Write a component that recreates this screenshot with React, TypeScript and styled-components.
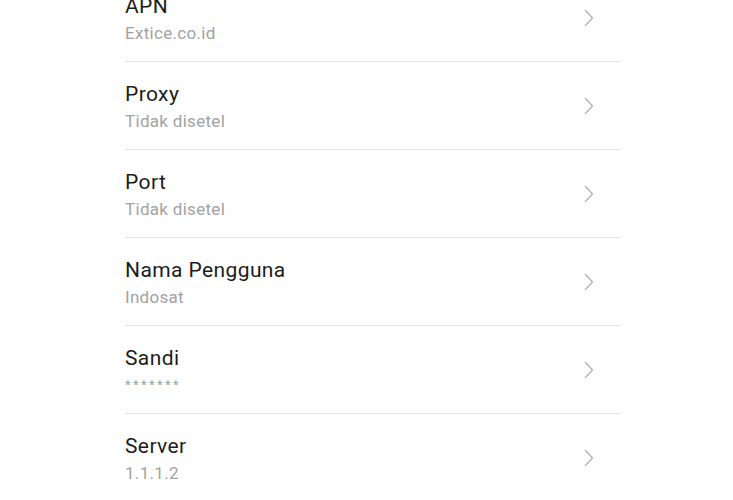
import styled, { createGlobalStyle } from 'styled-components';

const GlobalStyle = createGlobalStyle`
	body {
		margin: 0;
		background: #ffffff;
		font-family: Roboto, 'Noto Sans', sans-serif;
		overflow: hidden;
	}
`;

const items = [
	{ title: 'APN', value: 'Extice.co.id' },
	{ title: 'Proxy', value: 'Tidak disetel' },
	{ title: 'Port', value: 'Tidak disetel' },
	{ title: 'Nama Pengguna', value: 'Indosat' },
	{ title: 'Sandi', value: '*******' },
	{ title: 'Server', value: '1.1.1.2' },
];

const Chevron = () => (
	<svg width='12' height='18' viewBox='0 0 12 18' fill='none'>
		<path d='M2.5 1.5 L9.5 9 L2.5 16.5' stroke='#b8b8b8' strokeWidth='1.6' strokeLinecap='round' strokeLinejoin='round' />
	</svg>
);

const App = () => {
	return (
		<>
			<GlobalStyle />
			<Page>
				<List>
					{items.map((item) => (
						<Row key={item.title}>
							<Texts>
								<Title>{item.title}</Title>
								<Value masked={item.value.startsWith('*')}>{item.value}</Value>
							</Texts>
							<Chevron />
						</Row>
					))}
				</List>
			</Page>
		</>
	);
};

const Page = styled.div`
	width: 733px;
	height: 500px;
	overflow: hidden;
`;

const List = styled.div`
	margin-top: -26px;
	margin-left: 125px;
	width: 495px;
`;

const Row = styled.div`
	height: 87px;
	border-bottom: 1px solid #e3e3e3;
	display: flex;
	align-items: center;
	justify-content: space-between;
	padding-right: 25px;
	box-sizing: content-box;
	width: 470px;
`;

const Texts = styled.div`
	display: flex;
	flex-direction: column;
	margin-top: 2px;
`;

const Title = styled.div`
	font-size: 21px;
	line-height: 24px;
	letter-spacing: 0.4px;
	color: #1c1c1c;
`;

interface ValueProps {
	masked: boolean;
}

const Value = styled.div<ValueProps>`
	margin-top: 5px;
	font-size: ${(props) => (props.masked ? '13px' : '17px')};
	line-height: 20px;
	color: #a2a2a2;
	letter-spacing: ${(props) => (props.masked ? '2.4px' : '0.3px')};
`;

export default App;
